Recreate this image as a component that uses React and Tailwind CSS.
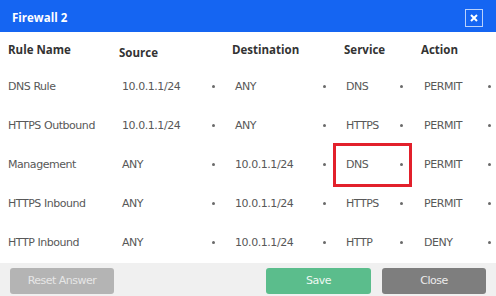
import React from "react";

const rows = [
  ["DNS Rule", "10.0.1.1/24", "ANY", "DNS", "PERMIT"],
  ["HTTPS Outbound", "10.0.1.1/24", "ANY", "HTTPS", "PERMIT"],
  ["Management", "ANY", "10.0.1.1/24", "DNS", "PERMIT"],
  ["HTTPS Inbound", "ANY", "10.0.1.1/24", "HTTPS", "PERMIT"],
  ["HTTP Inbound", "ANY", "10.0.1.1/24", "HTTP", "DENY"],
];

const Dot = () => <span className="block w-[3px] h-[3px] rounded-full bg-[#6a6a6a] -mt-[3px]" />;

export default function App() {
  return (
    <div className="w-[496px] h-[296px] bg-white flex flex-col overflow-hidden font-['DejaVu_Sans',sans-serif]">
      <div className="h-[32px] shrink-0 bg-[#1565f2] flex items-center justify-between pl-[12px] pr-[13px] pt-[3px]">
        <span className="text-white font-bold text-[11.5px] font-['Open_Sans',sans-serif]">Firewall 2</span>
        <div className="w-[18px] h-[18px] border border-white/70 flex items-center justify-center">
          <svg width="8" height="8" viewBox="0 0 8 8">
            <path d="M1 1L7 7M7 1L1 7" stroke="white" strokeWidth="2" />
          </svg>
        </div>
      </div>

      <div className="h-[36px] shrink-0 flex items-center text-[11.5px] font-bold text-[#333] font-['Open_Sans',sans-serif]">
        <div className="w-[109px] pl-[8px]">Rule Name</div>
        <div className="w-[113px] pl-[10px] mt-[5px]">Source</div>
        <div className="w-[111px] pl-[10px]">Destination</div>
        <div className="w-[79px] pl-[11px]">Service</div>
        <div className="w-[84px] pl-[9px]">Action</div>
      </div>

      <div className="flex flex-col text-[11px] text-[#585858] tracking-[-0.45px]">
        {rows.map((r, i) => (
          <div key={i} className="h-[39px] flex items-center">
            <div className="w-[109px] pl-[8px]">{r[0]}</div>
            <div className="w-[113px] h-full flex items-center justify-between pl-[13px] pr-[7px]">
              <span>{r[1]}</span>
              <Dot />
            </div>
            <div className="w-[111px] h-full flex items-center justify-between pl-[13px] pr-[7px]">
              <span>{r[2]}</span>
              <Dot />
            </div>
            <div className="relative w-[79px] h-full flex items-center justify-between pl-[13px] pr-[9px]">
              <span>{r[3]}</span>
              <Dot />
              {i === 2 && (
                <div className="absolute left-0 right-0 -top-[3px] -bottom-[2px] border-[3px] border-[#e2202b]" />
              )}
            </div>
            <div className="w-[84px] h-full flex items-center justify-between pl-[12px] pr-[5px]">
              <span>{r[4]}</span>
              <Dot />
            </div>
          </div>
        ))}
      </div>

      <div className="flex-1 bg-[#f0f0f0] flex items-start justify-between px-[10px] pt-[5px] text-[11px] tracking-[-0.5px]">
        <div className="w-[104px] h-[26px] rounded-[3px] bg-[#b4b4b4] text-[#e6e6e6] flex items-center justify-center">
          Reset Answer
        </div>
        <div className="flex gap-[11px]">
          <div className="w-[105px] h-[26px] rounded-[3px] bg-[#5bbd8c] text-[#eef8f2] flex items-center justify-center">
            Save
          </div>
          <div className="w-[104px] h-[26px] rounded-[3px] bg-[#7e7e7e] text-[#ececec] flex items-center justify-center">
            Close
          </div>
        </div>
      </div>
    </div>
  );
}
